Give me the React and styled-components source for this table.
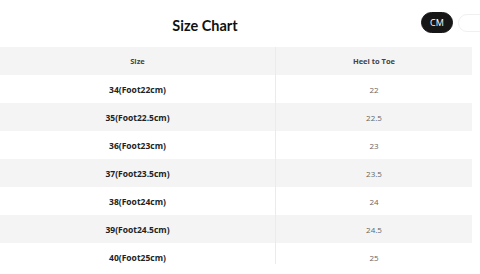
import React from "react";
import styled, { createGlobalStyle } from "styled-components";

const rows = [
  ["34(Foot22cm)", "22"],
  ["35(Foot22.5cm)", "22.5"],
  ["36(Foot23cm)", "23"],
  ["37(Foot23.5cm)", "23.5"],
  ["38(Foot24cm)", "24"],
  ["39(Foot24.5cm)", "24.5"],
  ["40(Foot25cm)", "25"],
];

const App = () => {
  return (
    <React.Fragment>
      <GlobalStyle />
      <Page>
        <Header>
          <Title>Size Chart</Title>
          <Units>
            <UnitButton active>CM</UnitButton>
            <UnitButton aria-label="INCH" />
          </Units>
        </Header>
        <TableWrap>
          <Table>
            <thead>
              <Row shaded>
                <HeadCell>Size</HeadCell>
                <HeadCell>Heel to Toe</HeadCell>
              </Row>
            </thead>
            <tbody>
              {rows.map(([size, length], i) => (
                <Row key={size} shaded={i % 2 === 1}>
                  <SizeCell>{size}</SizeCell>
                  <ValueCell>{length}</ValueCell>
                </Row>
              ))}
            </tbody>
          </Table>
        </TableWrap>
      </Page>
    </React.Fragment>
  );
};

const GlobalStyle = createGlobalStyle`
  html, body {
    margin: 0;
    padding: 0;
    background: #ffffff;
  }
  body {
    font-family: "Open Sans", "Liberation Sans", sans-serif;
    overflow: hidden;
  }
`;

const Page = styled.div`
  width: 480px;
  height: 274px;
  overflow: hidden;
`;

// 제목 + 단위 토글
const Header = styled.div`
  display: flex;
  align-items: center;
  height: 47px;
`;

const Title = styled.h1`
  flex: none;
  width: 410px;
  margin: 0;
  padding-top: 3px;
  text-align: center;
  font-family: "Lato", sans-serif;
  font-size: 14.5px;
  font-weight: 700;
  color: #111;
`;

const Units = styled.div`
  flex: none;
  display: flex;
  align-items: center;
  gap: 5px;
  margin-left: 11px;
  margin-top: -2px;
`;

const UnitButton = styled.div`
  flex: none;
  display: flex;
  align-items: center;
  justify-content: center;
  width: 32px;
  height: ${(p) => (p.active ? "21px" : "18px")};
  box-sizing: border-box;
  border-radius: 11px;
  font-size: 9px;
  letter-spacing: 0.2px;
  background: ${(p) => (p.active ? "#161616" : "#fff")};
  color: #fff;
  border: 1px solid ${(p) => (p.active ? "#161616" : "#f0f0f0")};
`;

// 표 영역
const TableWrap = styled.div`
  width: 472px;
  height: 217px;
  overflow: hidden;
`;

const Table = styled.table`
  width: 472px;
  border-collapse: collapse;
  table-layout: fixed;
  td:first-child,
  th:first-child {
    width: 275px;
    border-right: 1px solid #ebebeb;
  }
`;

const Row = styled.tr`
  height: 28px;
  background: ${(p) => (p.shaded ? "#f4f4f4" : "#ffffff")};
`;

const HeadCell = styled.th`
  padding: 0;
  text-align: center;
  font-size: 7.5px;
  font-weight: 700;
  color: #444;
`;

const SizeCell = styled.td`
  padding: 0;
  text-align: center;
  font-size: 8.5px;
  font-weight: 700;
  color: #222;
`;

const ValueCell = styled.td`
  padding: 0;
  text-align: center;
  font-size: 8px;
  color: #666;
`;

export default App;
